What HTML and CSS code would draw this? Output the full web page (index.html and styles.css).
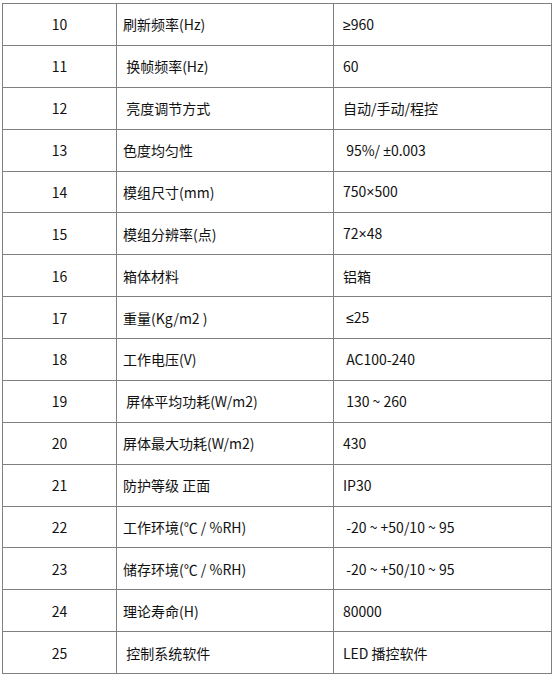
FILE: index.html
```html
<!DOCTYPE html>
<html lang="zh">
<head>
<meta charset="utf-8">
<link rel="stylesheet" href="styles.css">
</head>
<body>
<table class="spec">
<colgroup><col class="c1"><col class="c2"><col class="c3"></colgroup>
<tbody>
<tr><td class="num">10</td><td class="name">刷新频率(Hz)</td><td class="val"><span class="sym">≥</span>960</td></tr>
<tr><td class="num">11</td><td class="name"> 换帧频率(Hz)</td><td class="val">60</td></tr>
<tr><td class="num">12</td><td class="name"> 亮度调节方式</td><td class="val">自动/手动/程控</td></tr>
<tr><td class="num">13</td><td class="name">色度均匀性</td><td class="val"> 95%/ <span class="sym">±</span>0.003</td></tr>
<tr><td class="num">14</td><td class="name">模组尺寸(mm)</td><td class="val">750<span class="sym">×</span>500</td></tr>
<tr><td class="num">15</td><td class="name">模组分辨率(点)</td><td class="val">72<span class="sym">×</span>48</td></tr>
<tr><td class="num">16</td><td class="name">箱体材料</td><td class="val">铝箱</td></tr>
<tr><td class="num">17</td><td class="name">重量(Kg/m2 )</td><td class="val"> <span class="sym">≤</span>25</td></tr>
<tr><td class="num">18</td><td class="name">工作电压(V)</td><td class="val"> AC100-240</td></tr>
<tr><td class="num">19</td><td class="name"> 屏体平均功耗(W/m2)</td><td class="val"> 130 ~ 260</td></tr>
<tr><td class="num">20</td><td class="name">屏体最大功耗(W/m2)</td><td class="val">430</td></tr>
<tr><td class="num">21</td><td class="name">防护等级 正面</td><td class="val">IP30</td></tr>
<tr><td class="num">22</td><td class="name">工作环境(℃ / %RH)</td><td class="val"> -20 ~ +50/10 ~ 95</td></tr>
<tr><td class="num">23</td><td class="name">储存环境(℃ / %RH)</td><td class="val"> -20 ~ +50/10 ~ 95</td></tr>
<tr><td class="num">24</td><td class="name">理论寿命(H)</td><td class="val">80000</td></tr>
<tr><td class="num">25</td><td class="name"> 控制系统软件</td><td class="val">LED 播控软件</td></tr>
</tbody>
</table>
</body>
</html>
```
FILE: styles.css
```css
html, body {
  margin: 0;
  padding: 0;
  background: #fff;
}
body {
  padding: 3px 0 0 2px;
  font-family: "Noto Sans CJK SC", "Noto Sans", sans-serif;
  font-size: 14px;
  color: #111;
}
.spec {
  border-collapse: collapse;
  table-layout: fixed;
  width: 549px;
}
.c1 { width: 114px; }
.c2 { width: 217px; }
.c3 { width: 218px; }
.spec tr {
  height: 41.875px;
}
.spec td {
  border: 1px solid #808080;
  padding: 0;
  white-space: pre;
  vertical-align: middle;
  line-height: 18px;
}
.num {
  text-align: center;
}
.name {
  padding-left: 6px !important;
}
.val {
  padding-left: 9px !important;
}
.sym {
  font-family: "Liberation Sans", sans-serif;
}
```
